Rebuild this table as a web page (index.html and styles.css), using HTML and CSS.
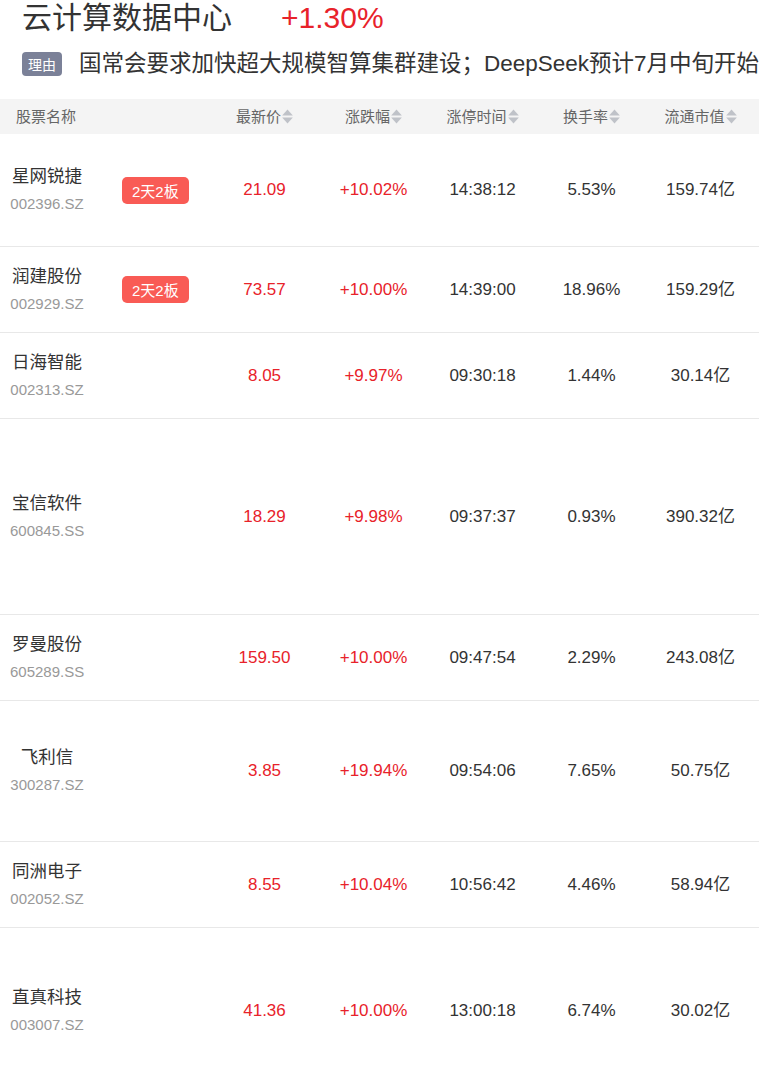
FILE: index.html
```html
<!DOCTYPE html>
<html lang="zh-CN">
<head>
<meta charset="utf-8">
<title>云计算数据中心</title>
<link rel="stylesheet" href="styles.css">
</head>
<body>
<div class="page">
  <div class="title-row">
    <span class="title">云计算数据中心</span>
    <span class="pct up">+1.30%</span>
  </div>
  <div class="reason-row">
    <span class="reason-tag">理由</span>
    <span class="reason-text">国常会要求加快超大规模智算集群建设；DeepSeek预计7月中旬开始</span>
  </div>

  <div class="table">
    <div class="thead">
      <div class="th th-name">股票名称</div>
      <div class="th">最新价<svg class="sort" viewBox="0 0 10 16"><path d="M0 7L5 1.5L10 7Z"/><path d="M0 9L5 14.5L10 9Z"/></svg></div>
      <div class="th">涨跌幅<svg class="sort" viewBox="0 0 10 16"><path d="M0 7L5 1.5L10 7Z"/><path d="M0 9L5 14.5L10 9Z"/></svg></div>
      <div class="th">涨停时间<svg class="sort" viewBox="0 0 10 16"><path d="M0 7L5 1.5L10 7Z"/><path d="M0 9L5 14.5L10 9Z"/></svg></div>
      <div class="th">换手率<svg class="sort" viewBox="0 0 10 16"><path d="M0 7L5 1.5L10 7Z"/><path d="M0 9L5 14.5L10 9Z"/></svg></div>
      <div class="th">流通市值<svg class="sort" viewBox="0 0 10 16"><path d="M0 7L5 1.5L10 7Z"/><path d="M0 9L5 14.5L10 9Z"/></svg></div>
    </div>

    <div class="row h113">
      <div class="cell-name"><div class="stock"><div class="sname">星网锐捷</div><div class="scode">002396.SZ</div></div><span class="board">2天2板</span></div>
      <div class="td up">21.09</div><div class="td up">+10.02%</div><div class="td">14:38:12</div><div class="td">5.53%</div><div class="td">159.74亿</div>
    </div>
    <div class="row h86">
      <div class="cell-name"><div class="stock"><div class="sname">润建股份</div><div class="scode">002929.SZ</div></div><span class="board">2天2板</span></div>
      <div class="td up">73.57</div><div class="td up">+10.00%</div><div class="td">14:39:00</div><div class="td">18.96%</div><div class="td">159.29亿</div>
    </div>
    <div class="row h86">
      <div class="cell-name"><div class="stock"><div class="sname">日海智能</div><div class="scode">002313.SZ</div></div></div>
      <div class="td up">8.05</div><div class="td up">+9.97%</div><div class="td">09:30:18</div><div class="td">1.44%</div><div class="td">30.14亿</div>
    </div>
    <div class="row h196">
      <div class="cell-name"><div class="stock"><div class="sname">宝信软件</div><div class="scode">600845.SS</div></div></div>
      <div class="td up">18.29</div><div class="td up">+9.98%</div><div class="td">09:37:37</div><div class="td">0.93%</div><div class="td">390.32亿</div>
    </div>
    <div class="row h86">
      <div class="cell-name"><div class="stock"><div class="sname">罗曼股份</div><div class="scode">605289.SS</div></div></div>
      <div class="td up">159.50</div><div class="td up">+10.00%</div><div class="td">09:47:54</div><div class="td">2.29%</div><div class="td">243.08亿</div>
    </div>
    <div class="row h141">
      <div class="cell-name"><div class="stock"><div class="sname">飞利信</div><div class="scode">300287.SZ</div></div></div>
      <div class="td up">3.85</div><div class="td up">+19.94%</div><div class="td">09:54:06</div><div class="td">7.65%</div><div class="td">50.75亿</div>
    </div>
    <div class="row h86">
      <div class="cell-name"><div class="stock"><div class="sname">同洲电子</div><div class="scode">002052.SZ</div></div></div>
      <div class="td up">8.55</div><div class="td up">+10.04%</div><div class="td">10:56:42</div><div class="td">4.46%</div><div class="td">58.94亿</div>
    </div>
    <div class="row h166">
      <div class="cell-name"><div class="stock"><div class="sname">直真科技</div><div class="scode">003007.SZ</div></div></div>
      <div class="td up">41.36</div><div class="td up">+10.00%</div><div class="td">13:00:18</div><div class="td">6.74%</div><div class="td">30.02亿</div>
    </div>
  </div>
</div>
</body>
</html>
```

FILE: styles.css
```css
* { box-sizing: border-box; }
html, body {
  margin: 0;
  padding: 0;
  background: #fff;
}
body {
  font-family: "Liberation Sans", "Noto Sans CJK SC", Arial, sans-serif;
  color: #333;
  overflow: hidden;
}
.page {
  width: 759px;
}
.title-row {
  display: flex;
  align-items: center;
  height: 36px;
  padding-left: 22px;
  white-space: nowrap;
}
.title {
  font-size: 30px;
  line-height: 36px;
  color: #333;
}
.pct {
  font-size: 30px;
  line-height: 36px;
  margin-left: 49px;
}
.up { color: #e8222a; }
.reason-row {
  display: flex;
  align-items: center;
  height: 40px;
  margin-top: 8px;
  padding-left: 22px;
  white-space: nowrap;
  overflow: hidden;
}
.reason-tag {
  flex: none;
  display: inline-flex;
  align-items: center;
  justify-content: center;
  width: 40px;
  height: 24px;
  border-radius: 4px;
  background: #7b8198;
  color: #fff;
  font-size: 14px;
}
.reason-text {
  margin-left: 17px;
  font-size: 22.5px;
  line-height: 30px;
  color: #333;
}
.table {
  margin-top: 15px;
}
.thead {
  display: grid;
  grid-template-columns: 210px repeat(5, 109px);
  height: 35px;
  background: #f4f4f4;
  align-items: center;
}
.th {
  display: flex;
  align-items: center;
  justify-content: center;
  font-size: 15px;
  line-height: 20px;
  color: #666;
}
.th-name {
  justify-content: flex-start;
  padding-left: 16px;
}
.sort {
  width: 11px;
  height: 17px;
  margin-left: 1px;
  fill: #bfc2c8;
}
.row {
  display: grid;
  grid-template-columns: 210px repeat(5, 109px);
  align-items: center;
  border-bottom: 1px solid #e8e8e8;
}
.h86 { height: 86px; }
.h113 { height: 113px; }
.h141 { height: 141px; }
.h166 { height: 166px; }
.h196 { height: 196px; }
.cell-name {
  display: flex;
  align-items: center;
  padding-left: 10px;
}
.stock {
  width: 74px;
  text-align: center;
}
.sname {
  font-size: 17.5px;
  line-height: 28px;
  color: #333;
}
.scode {
  font-size: 15px;
  line-height: 28px;
  color: #999;
}
.board {
  display: inline-flex;
  align-items: center;
  justify-content: center;
  height: 27px;
  padding: 0 10px;
  margin-left: 38px;
  border-radius: 5px;
  background: #f95b55;
  color: #fff;
  font-size: 15px;
}
.td {
  text-align: center;
  font-size: 17px;
  line-height: 24px;
  height: 24px;
  color: #333;
  white-space: nowrap;
}
.td.up { color: #e8222a; }
```
